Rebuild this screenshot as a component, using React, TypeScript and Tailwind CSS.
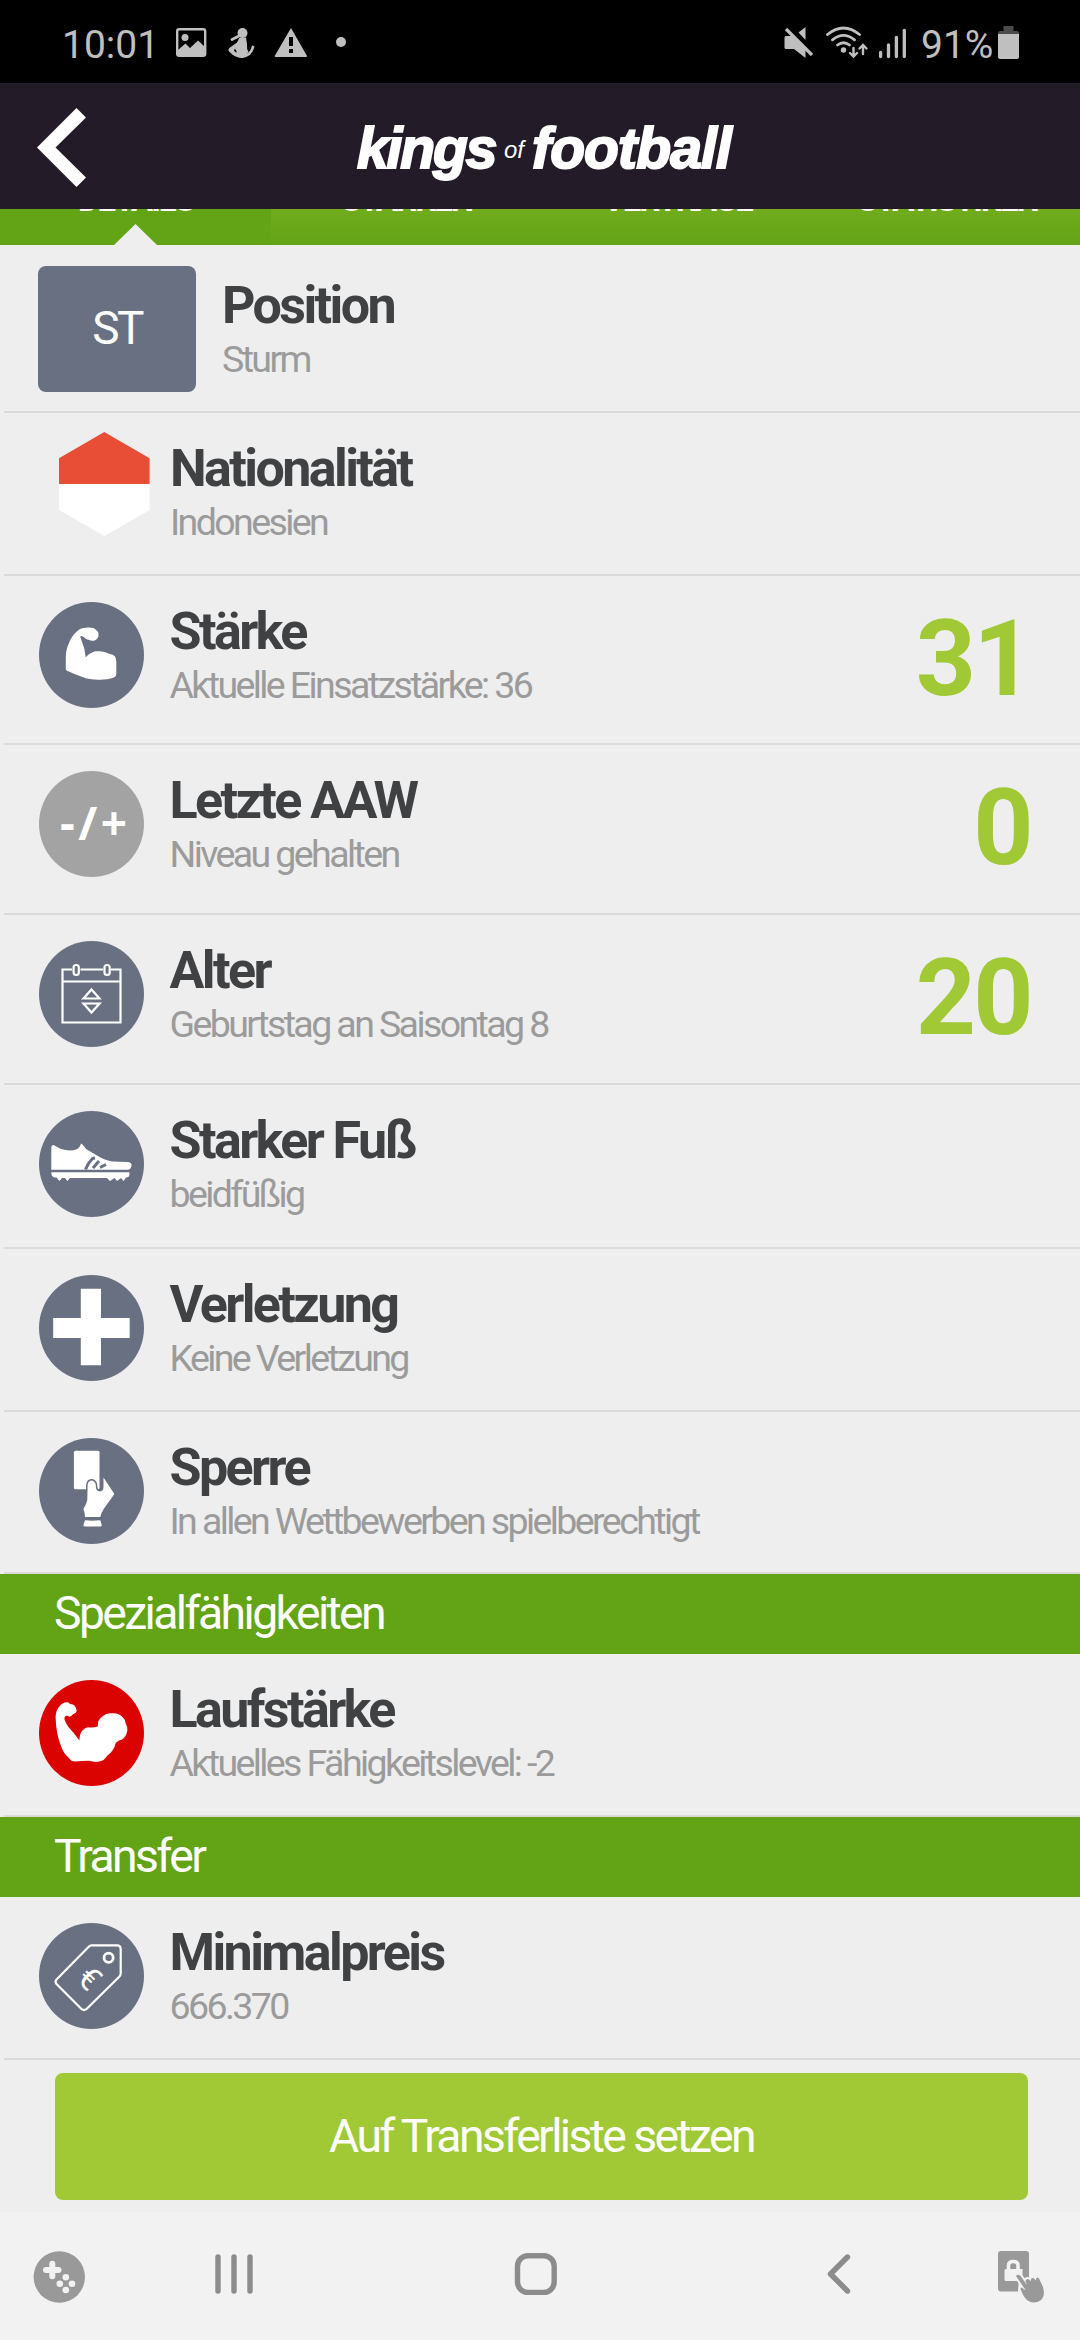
import type { ReactNode } from "react";

interface Detail {
  title: string;
  text: string;
  height: string;
  icon: ReactNode;
  value?: string;
}

const roboto = "font-[Roboto,'Liberation_Sans',sans-serif]";

function Badge({ color = "#687082", children }: { color?: string; children: ReactNode }) {
  return (
    <svg viewBox="0 0 105 106" className="mt-[26px] ml-[34.5px] h-[106px] w-[105px] shrink-0" fill="#fff">
      <ellipse cx="52.5" cy="53" rx="52.5" ry="53" fill={color} />
      {children}
    </svg>
  );
}

const flag = (
  <svg viewBox="0 0 91 104" className="mt-[18.5px] mr-[-5.5px] ml-[54.5px] h-[104px] w-[91px] shrink-0">
    <path d="M0 52V26.3L45.3 0 90.6 26.3V52z" fill="#e84e36" />
    <path d="M0 52h90.6v26L45.3 104 0 78z" fill="#fff" />
  </svg>
);

const strength = (
  <Badge>
    <path d="M26.8 67.3V54.7C27 49 28 45.500 29.900 41.300C31.500 37 34 32.500 37.500 29.700C40 27 43 25.700 47 25.700C51 25.200 55.500 25.500 57 28C59.500 29.500 59.700 31 59.400 33.500C59.400 36 57 38.800 54 38.800C52.500 39 51 38.500 49.800 37.700C47.500 38.300 45.500 35 43.300 34.300Q41 33.500 41.400 35.300L45.200 46.300L46.700 55.300Q50 51.500 52.800 50.700C55 49.300 58 49 60 49.300C64 49.500 67 50.500 70 51.700C73 52.200 74.500 53 75.800 54.300Q77.300 56 77.300 59.700V72Q77.300 74.700 75 75.500C70 77.200 65 77.800 59.700 77.700C53 77.500 48 76.800 43.300 75C38 73 33 71 28.500 69Q26.800 68.300 26.800 67.300z" />
  </Badge>
);

const lastChange = (
  <Badge color="#a3a3a3">
    <text x="21" y="68.500" fontSize="46" fontWeight="700" letterSpacing="3.500" fontFamily="'Open Sans', sans-serif">
      -/+
    </text>
  </Badge>
);

const calendar = (
  <Badge>
    <g fill="none" stroke="#fff" strokeWidth="2.2">
      <path d="M33 28.500h-9.500V81.500h58V28.500H72M41.500 28.500H64M23.500 40.500h58" />
      <rect x="34.600" y="24" width="5.200" height="10" rx="2.500" />
      <rect x="65.500" y="24" width="5.200" height="10" rx="2.500" />
      <path d="M52.500 48.500L60.500 57.500H44.500zM52.500 71.500L60.500 62.500H44.500z" />
    </g>
  </Badge>
);

const shoe = (
  <Badge>
    <path d="M12.300 36Q13 33.500 15 34.200L22 38Q31 40.500 37 38.500Q40.500 37.500 42 32.500Q43.500 32.800 47 38L58 44.500Q66 49.500 74 50.500L88 51Q93 51.200 92.600 54.500Q92 58.700 88 58.700H12.300z" />
    <path d="M12.300 61.300H90.400V64Q90 66.500 87 66.500L84.500 70 82 67 78 70 75.500 67 71 70 68 67H31L28.500 70 26 67 23 67 20.500 70 17.500 66.500Q12.300 67 12.300 61.300z" />
    <path d="M46.500 58.500Q49 52 53.500 47.500L56 47M54 57L60 50M61 56.500L67 53.500" fill="none" stroke="#687082" strokeWidth="3" />
  </Badge>
);

const injury = (
  <Badge>
    <path d="M41.800 13.700H62V43H90.700V63H62V90.300H41.800V63H14.200V43H41.800z" />
  </Badge>
);

const card = (
  <Badge>
    <rect x="34.900" y="12.700" width="25.600" height="38.600" rx="1.500" />
    <path
      d="M52.500 42.500Q56.300 43 56.800 47Q56.500 53 61 53.500Q64.500 53 64.500 49V39.500L75.400 56L65 70.500Q62 75 61.300 79H46Q46 75 44.400 71Q47.500 66 48.300 62L48.600 47Q49 43 52.500 42.500z"
      stroke="#687082"
      strokeWidth="3"
      paintOrder="stroke"
    />
    <path d="M46 82.300Q53 83 61.300 82.300L62.800 87Q62.800 88.500 61 88.500H46Q44.400 88.500 44.400 87z" />
  </Badge>
);

const runStrength = (
  <Badge color="#db0202">
    <path d="M16.600 37Q17 30 20 27Q23 22 29 22.300Q31 24.500 34 24.500Q37 26 37.700 31Q37 33.500 34 34.300Q32 37 29.900 36.600L28 35.500Q25 36 25.500 39.500Q27 44 29.900 47.600Q35 53 40.400 60.500Q40.500 53 44 50Q46 47.500 49.500 47.300Q54 48 58.800 46.500Q58 40 64 36Q67 33 72 33.300Q80 32.500 83.500 37Q86 39 86.500 43Q89 47 88.300 51Q87 57 83 59.500Q79 60 76.700 63Q75 71 68 76Q65 81 60 81.600Q55 82.500 50.500 80.800Q42 80.800 36 81.600Q32 81.500 30 78Q24 73 22 66Q17 54 16.600 37z" />
  </Badge>
);

const priceTag = (
  <Badge>
    <g fill="none" stroke="#fff" strokeWidth="2.200" strokeLinejoin="round">
      <path d="M52.500 22.300H78Q81.700 22.300 81.700 26V50.500Q81.700 52.500 80 54L47.500 86Q45 88 42.500 86L17.500 61Q15.500 58.500 17.500 56.500L49.500 24Q51 22.300 52.500 22.300z" />
      <circle cx="69.600" cy="34.700" r="4.600" strokeWidth="2.800" />
    </g>
    <text fontSize="32" textAnchor="middle" transform="translate(50 56) rotate(45)" y="10" className={roboto}>
      €
    </text>
  </Badge>
);

const details: Detail[] = [
  { title: "Nationalität", text: "Indonesien", height: "h-[163px]", icon: flag },
  { title: "Stärke", text: "Aktuelle Einsatzstärke: 36", height: "h-[169px]", icon: strength, value: "31" },
  { title: "Letzte AAW", text: "Niveau gehalten", height: "h-[170px]", icon: lastChange, value: "0" },
  { title: "Alter", text: "Geburtstag an Saisontag 8", height: "h-[170px]", icon: calendar, value: "20" },
  { title: "Starker Fuß", text: "beidfüßig", height: "h-[164px]", icon: shoe },
  { title: "Verletzung", text: "Keine Verletzung", height: "h-[163px]", icon: injury },
  { title: "Sperre", text: "In allen Wettbewerben spielberechtigt", height: "h-[162px]", icon: card },
];

function Label({ title, text }: { title: string; text: string }) {
  return (
    <div className="tracking-[-2.6px]">
      <div className="text-[52px] leading-[60px] font-bold text-[#3f4143]">{title}</div>
      <div className="text-[37.500px] leading-[46px] text-[#9b9b9b]">{text}</div>
    </div>
  );
}

function Row({ title, text, height, icon, value }: Detail) {
  return (
    <div className={`ml-1 flex border-b-2 border-[#dadada] ${height}`}>
      {icon}
      <div className="mt-[26px] ml-[26px] flex-1">
        <Label title={title} text={text} />
      </div>
      {value && (
        <div className="mt-6 mr-[49px] text-[105px] leading-[120px] font-bold tracking-[-2.6px] text-[#a0c935]">
          {value}
        </div>
      )}
    </div>
  );
}

function SectionTitle({ children }: { children: ReactNode }) {
  return (
    <h2 className="h-20 bg-[#63a316] pl-[54px] text-[46.300px] leading-[79px] tracking-[-2.6px] text-white">
      {children}
    </h2>
  );
}

function StatusBar() {
  return (
    <div className="flex h-[83px] items-start bg-black text-[39px] leading-[46px] text-[#bfbfbf]">
      <span className="mt-[22px] ml-[62px] w-[114px]">10:01</span>
      <svg viewBox="176 20 180 46" className="mt-5 h-[46px] w-[180px]" fill="#bfbfbf">
        <rect x="177.200" y="29.200" width="28" height="26.500" rx="2" fill="none" stroke="#bfbfbf" strokeWidth="2.400" />
        <circle cx="185" cy="37.500" r="3.500" />
        <path d="M178 50L185.500 43.500L190 48L198 40.500L205 47V56H178z" />
        <circle cx="242.500" cy="33" r="5" />
        <path d="M239.500 37.500H246L247 44Q246.500 49 248.500 52L243 58Q235 58 229.500 52Q227 49.500 230 47.500L237 42.500zM235 48.500L234 50.500Q235 52.500 237 52.500z" fillRule="evenodd" />
        <path d="M232 39.500L238 36.500M242 56.500Q251 55.500 253 47" fill="none" stroke="#bfbfbf" strokeWidth="2.800" strokeLinecap="round" />
        <path d="M291 28L307 56Q307 57 306 57H275.500Q274.500 57 274.700 56z" />
        <path d="M289 37h4v9h-4zM289 49h4v4h-4z" fill="#000" />
        <circle cx="341" cy="42" r="5" />
      </svg>
      <svg viewBox="784 20 130 46" className="mt-5 ml-auto h-[46px] w-[130px]" fill="#bfbfbf">
        <path d="M805.500 27V40L798.500 32.500zM784.500 37.500Q784.500 36 786 36H791.500L805.500 50V58L794 49H786Q784.500 49 784.500 47.500z" />
        <path d="M786 29L812 55" stroke="#bfbfbf" strokeWidth="3.200" />
        <g fill="none" stroke="#bfbfbf" strokeWidth="2.800" strokeLinecap="round">
          <path d="M827.500 34.500Q843.500 21.500 859.500 34.500M832.500 39.800Q843.500 31 854.500 39.800M837.500 45Q843.500 40.500 849.500 45" />
          <path d="M853.500 48V56M850 53L853.500 56.500L857 53M863 54V46M859.500 48.500L863 45L866.500 48.500" strokeWidth="2.400" />
          <path d="M880.600 52.500V56.500M888.500 45V56.500M896.400 37.300V56.500M904.300 30.300V56.500" strokeWidth="3.300" />
        </g>
        <circle cx="843.500" cy="50" r="2.700" />
      </svg>
      <span className="mt-[22px] ml-[7px] w-[77px]">91%</span>
      <svg viewBox="0 0 21 33" className="mt-[26px] mr-[61px] h-[33px] w-[21px]">
        <path d="M5.500 0h10v5H19q2 0 2 2v1H0V7q0-2 2-2h3.500z" fill="#4b4b4b" />
        <path d="M0 8h21v23q0 2-2 2H2q-2 0-2-2z" fill="#bfbfbf" />
      </svg>
    </div>
  );
}

function Header() {
  return (
    <header className="flex h-[126px] items-center bg-[#241b29] pt-[3px]">
      <svg viewBox="0 0 49 79" className="ml-[37px] h-[79px] w-[49px]">
        <path d="M39.500 0L49 9.500L18.500 39.500L49 69.500L39.500 79L0 39.500z" fill="#fff" />
      </svg>
      <div className="mt-3 ml-[271px] flex items-baseline font-['Liberation_Sans',sans-serif] text-[57px] leading-[64px] font-bold text-white italic">
        <span className="w-[147px] tracking-[-0.037em] [-webkit-text-stroke:2px_#fff]">kings</span>
        <span className="relative -top-2.5 w-[28px] text-[24px] font-normal">of</span>
        <span className="tracking-[-0.015em] [-webkit-text-stroke:2px_#fff]">football</span>
      </div>
    </header>
  );
}

// The tab bar is scrolled under the header, only its lower edge is visible
function Tabs() {
  return (
    <div className="relative flex h-9 items-end overflow-hidden bg-linear-to-b from-[#71ac1d] to-[#63a316] text-center text-[33px] leading-10 font-bold tracking-[-2px] text-white">
      <div className="h-[76px] w-[271px] shrink-0 bg-[#63a316] pt-[11px]">DETAILS</div>
      <div className="h-[76px] w-[271px] shrink-0 pt-[11px]">STÄRKEN</div>
      <div className="h-[76px] w-[271px] shrink-0 pt-[11px]">VERTRÄGE</div>
      <div className="h-[76px] w-[269px] shrink-0 pt-[11px]">STATISTIKEN</div>
      <svg viewBox="0 0 43 21" className="absolute bottom-0 left-[114px] h-[21px] w-[43px]">
        <path d="M0 21L21.500 0L43 21z" fill="#eee" />
      </svg>
    </div>
  );
}

function NavBar() {
  return (
    <nav className="h-32 bg-[#f2f2f2]">
      <svg viewBox="0 0 1080 128" className="h-32 w-full" fill="#999">
        <circle cx="59.300" cy="65" r="25.700" />
        <path d="M52.300 51.700V64.200M46 58H58.500" stroke="#f2f2f2" strokeWidth="6" strokeLinecap="round" />
        <g fill="#f2f2f2">
          <circle cx="65.800" cy="65.300" r="3.300" />
          <circle cx="59.800" cy="71.700" r="3.300" />
          <circle cx="72" cy="71.700" r="3.300" />
          <circle cx="65.800" cy="78" r="3.300" />
        </g>
        <g fill="none" stroke="#8c8c8c" strokeWidth="5.400" strokeLinecap="round">
          <path d="M218 45V79M234 45V79M250 45V79" />
          <rect x="517.500" y="43.700" width="36.700" height="36.700" rx="10.500" />
          <path d="M847.500 45L830.500 62L847.500 79" strokeLinejoin="round" />
        </g>
        <path d="M1001 39h25q3 0 3 3v24l-10 0-1 13.500h-17q-3 0-3-3V42q0-3 3-3z" />
        <path d="M1006 57h16.500v12H1006q-1.500 0-1.500-1.500v-9q0-1.500 1.500-1.500z" fill="#f2f2f2" />
        <path d="M1008.500 58V53.500Q1008.500 49.500 1013.300 49.500Q1018 49.500 1018 53.500V58" fill="none" stroke="#f2f2f2" strokeWidth="3.600" />
        <path
          d="M1016 64Q1018 61.500 1020.500 64L1027 73L1025.500 69Q1027 65.500 1029.500 68L1031 69.500Q1030 65.500 1033.500 66L1036 68.500Q1036 64 1039 66.500L1043 75Q1045.500 84 1041 88Q1034 93 1027 88Q1023.500 85 1020.500 77Q1021 74 1024 77.500L1025.500 78z"
          stroke="#f2f2f2"
          strokeWidth="4"
          paintOrder="stroke"
        />
      </svg>
    </nav>
  );
}

export default function App() {
  return (
    <div className={`h-[2340px] w-[1080px] overflow-hidden bg-[#eee] ${roboto}`}>
      <StatusBar />
      <Header />
      <Tabs />

      {/* Position */}
      <div className="ml-1 flex h-[168px] border-b-2 border-[#dadada]">
        <div className="mt-[21px] ml-[34px] h-[126px] w-[158px] rounded-lg bg-[#687082] text-center text-[46px] leading-[124px] tracking-[-2.6px] text-white">
          ST
        </div>
        <div className="mt-[31px] ml-[26px]">
          <Label title="Position" text="Sturm" />
        </div>
      </div>

      {details.map((detail) => (
        <Row key={detail.title} {...detail} />
      ))}

      <SectionTitle>Spezialfähigkeiten</SectionTitle>
      <Row title="Laufstärke" text="Aktuelles Fähigkeitslevel: -2" height="h-[163px]" icon={runStrength} />

      <SectionTitle>Transfer</SectionTitle>
      <Row title="Minimalpreis" text="666.370" height="h-[163px]" icon={priceTag} />

      <div className="h-[152px] pt-[13px] pr-[52px] pl-[55px]">
        <button className="block h-[127px] w-full rounded-lg bg-[#a0c935] text-[46.300px] leading-[127px] tracking-[-2.6px] text-white">
          Auf Transferliste setzen
        </button>
      </div>

      <NavBar />
    </div>
  );
}
